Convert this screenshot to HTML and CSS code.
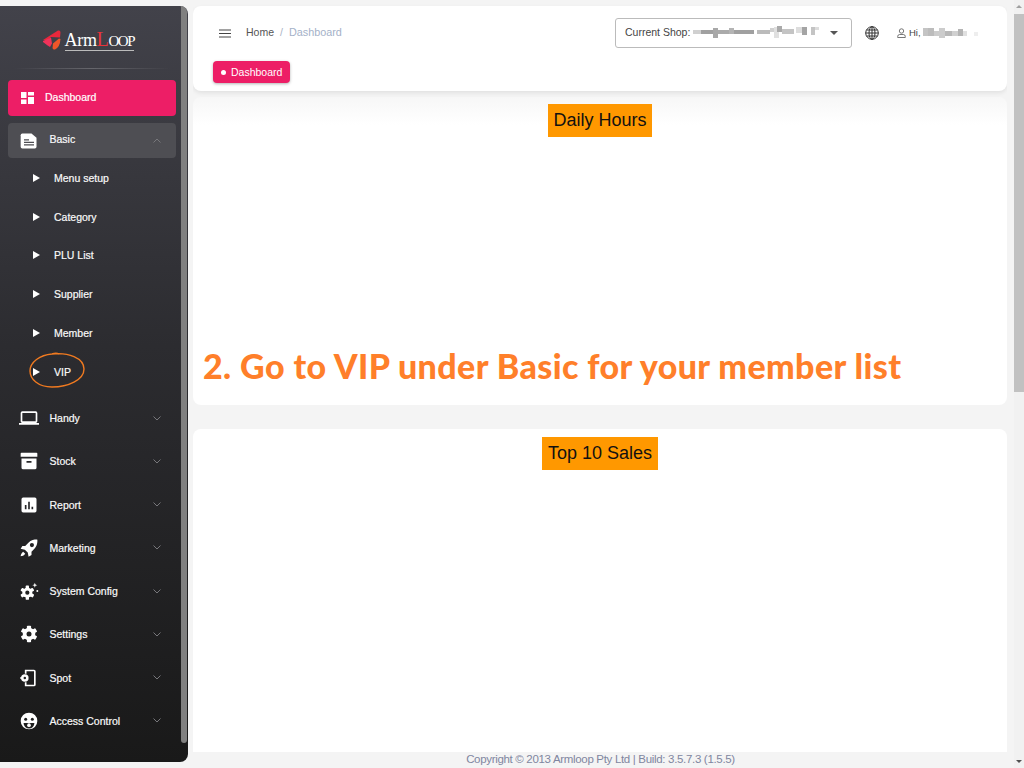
FILE: index.html
```html
<!DOCTYPE html>
<html lang="en">
<head>
  <meta charset="UTF-8">
  <meta name="viewport" content="width=device-width, initial-scale=1.0">
  <title>Armloop Dashboard</title>
  <link rel="stylesheet" href="styles.css">
</head>
<body>
  <div class="app">
    <aside class="sidebar">
      <div class="logo">
        <svg class="logo-mark" width="20" height="20" viewBox="0 0 20 20">
          <path d="M1 10 L16 .5 Q18.500 0 18.500 2.500 L18 7.500 L9 7 L5 10.500 Z" fill="#e8283c"/>
          <path d="M1 11 L9 7.500 L10 13.500 L8 17 Q6 16 1 12 Z" fill="#f0325a"/>
          <path d="M17 8.500 L18.500 9 Q18 17 13 19.500 Q11 20 10.500 18 L11 13.500 Z" fill="#f0562a"/>
        </svg>
        <span class="logo-text">Arm<span class="logo-l">L</span><span class="logo-oop">OOP</span></span>
      </div>
      <div class="divider"></div>

      <a class="nav-active">
        <svg class="active-icon" width="13" height="12" viewBox="0 0 13 12" fill="#fff">
          <rect x="0" y="0" width="5.500" height="6"/><rect x="7" y="0" width="6" height="3.500"/>
          <rect x="0" y="7.500" width="5.500" height="4.500"/><rect x="7" y="5" width="6" height="7"/>
        </svg>
        <span class="active-label">Dashboard</span>
      </a>

      <div class="nav-open">
        <svg class="nav-icon" width="20" height="20" viewBox="0 0 24 24"><path fill="#fff" d="M4 3h11l6 5v11a2 2 0 0 1-2 2H4a2 2 0 0 1-2-2V5a2 2 0 0 1 2-2z"/><path fill="#4e4e53" d="M6 10h6v1.500H6zM6 13h12v1.500H6zM6 16h12v1.500H6z"/></svg>
        <span class="nav-label">Basic</span>
        <svg class="chev" width="8" height="5" viewBox="0 0 8 5"><path d="M.5 4.500 4 1l3.500 3.500"/></svg>
      </div>

      <ul class="submenu">
        <li><i class="tri"></i>Menu setup</li>
        <li><i class="tri"></i>Category</li>
        <li><i class="tri"></i>PLU List</li>
        <li><i class="tri"></i>Supplier</li>
        <li><i class="tri"></i>Member</li>
        <li><i class="tri"></i>VIP</li>
      </ul>

      <ul class="menu">
        <li>
          <svg class="nav-icon" width="20" height="20" viewBox="0 0 24 24" fill="#fff"><path d="M20 18a2 2 0 0 0 2-2V6a2 2 0 0 0-2-2H4a2 2 0 0 0-2 2v10a2 2 0 0 0 2 2H0v2h24v-2zM4 6h16v10H4z"/></svg>
          <span class="nav-label">Handy</span>
          <svg class="chev" width="8" height="5" viewBox="0 0 8 5"><path d="M.5 .5 4 4l3.500-3.500"/></svg>
        </li>
        <li>
          <svg class="nav-icon" width="20" height="20" viewBox="0 0 24 24" fill="#fff"><path d="M3 2h18a1 1 0 0 1 1 1v4H2V3a1 1 0 0 1 1-1zM3 9h18v11a2 2 0 0 1-2 2H5a2 2 0 0 1-2-2zm6 3v2h6v-2z"/></svg>
          <span class="nav-label">Stock</span>
          <svg class="chev" width="8" height="5" viewBox="0 0 8 5"><path d="M.5 .5 4 4l3.500 -3.500"/></svg>
        </li>
        <li>
          <svg class="nav-icon" width="20" height="20" viewBox="0 0 24 24" fill="#fff"><path d="M19 3H5a2 2 0 0 0-2 2v14a2 2 0 0 0 2 2h14a2 2 0 0 0 2-2V5a2 2 0 0 0-2-2zM9 17H7v-5h2zm4 0h-2V8h2zm4 0h-2v-3h2z"/></svg>
          <span class="nav-label">Report</span>
          <svg class="chev" width="8" height="5" viewBox="0 0 8 5"><path d="M.5 .5 4 4l3.500-3.500"/></svg>
        </li>
        <li>
          <svg class="nav-icon" width="20" height="20" viewBox="0 0 24 24" fill="#fff"><path d="M22 2s-6-1-11 4L7.500 9.500H4l-2 3.500 5 1 3.500 3.500 1 5 3.500-2v-4l3.500-3.500C23 8 22 2 22 2zM15.500 11a2.500 2.500 0 1 1 0-5 2.500 2.500 0 0 1 0 5zM5 16.500c-2 1-3 4-3 5.500 1.500 0 4.500-1 5.500-3z"/></svg>
          <span class="nav-label">Marketing</span>
          <svg class="chev" width="8" height="5" viewBox="0 0 8 5"><path d="M.5 .5 4 4l3.500-3.500"/></svg>
        </li>
        <li>
          <svg class="nav-icon" width="20" height="20" viewBox="0 0 24 24" fill="#fff">
            <circle cx="10" cy="14" r="6"/>
            <rect x="8" y="5.500" width="4" height="17" rx="1"/>
            <rect x="8" y="5.500" width="4" height="17" rx="1" transform="rotate(60 10 14)"/>
            <rect x="8" y="5.500" width="4" height="17" rx="1" transform="rotate(120 10 14)"/>
            <circle cx="10" cy="14" r="2.500" fill="#222"/>
            <path d="M19 2l.8 2.200L22 5l-2.200.8L19 8l-.8-2.200L16 5l2.200-.8z"/>
            <circle cx="22" cy="12" r="1.200"/>
          </svg>
          <span class="nav-label">System Config</span>
          <svg class="chev" width="8" height="5" viewBox="0 0 8 5"><path d="M.5 .5 4 4l3.500-3.500"/></svg>
        </li>
        <li>
          <svg class="nav-icon" width="20" height="20" viewBox="0 0 24 24" fill="#fff">
            <circle cx="12" cy="12" r="7.500"/>
            <rect x="9.500" y="2" width="5" height="20" rx="1"/>
            <rect x="9.500" y="2" width="5" height="20" rx="1" transform="rotate(60 12 12)"/>
            <rect x="9.500" y="2" width="5" height="20" rx="1" transform="rotate(120 12 12)"/>
            <circle cx="12" cy="12" r="3" fill="#222"/>
          </svg>
          <span class="nav-label">Settings</span>
          <svg class="chev" width="8" height="5" viewBox="0 0 8 5"><path d="M.5 .5 4 4l3.500-3.500"/></svg>
        </li>
        <li>
          <svg class="nav-icon" width="20" height="20" viewBox="0 0 24 24" fill="#fff"><path d="M7 2h11a2 2 0 0 1 2 2v16a2 2 0 0 1-2 2H7v-5h2v3h9V4H9v3H7z"/><circle cx="7" cy="12" r="4.500"/><rect x="1.500" y="11" width="2" height="2"/><circle cx="7" cy="12" r="1.500" fill="#222"/></svg>
          <span class="nav-label">Spot</span>
          <svg class="chev" width="8" height="5" viewBox="0 0 8 5"><path d="M.5 .5 4 4l3.500-3.500"/></svg>
        </li>
        <li>
          <svg class="nav-icon" width="20" height="20" viewBox="0 0 24 24">
            <circle cx="12" cy="12" r="10" fill="#fff"/>
            <g fill="#1e1e1e">
              <circle cx="8" cy="10" r="1.800"/><circle cx="16" cy="10" r="1.800"/>
              <path d="M5.500 14.500h13a6.500 6.500 0 0 1-13 0z"/>
            </g>
            <circle cx="12" cy="17" r="2.200" fill="#fff"/>
          </svg>
          <span class="nav-label">Access Control</span>
          <svg class="chev" width="8" height="5" viewBox="0 0 8 5"><path d="M.5 .5 4 4l3.500-3.500"/></svg>
        </li>
      </ul>
      <div class="side-scroll"></div>
    </aside>

    <main class="content">
      <header class="topbar">
        <div class="topbar-row">
          <svg class="burger" width="12" height="9" viewBox="0 0 12 9"><path d="M0 1h12M0 4.500h12M0 8h12"/></svg>
          <span class="crumb">Home</span>
          <span class="crumb-sep">/</span>
          <span class="crumb-current">Dashboard</span>
          <div class="shop-select">
            <span class="shop-label">Current Shop:</span>
            <svg class="mosaic" width="130" height="14" viewBox="0 0 130 14">
              <rect x="0" y="4" width="8" height="4" fill="#d0d0d0"/><rect x="8" y="4" width="12" height="4" fill="#a0a0a0"/>
              <rect x="20" y="2" width="5" height="10" fill="#a8a8a8"/><rect x="25" y="4" width="11" height="4" fill="#aaa"/>
              <rect x="36" y="2" width="5" height="6" fill="#b4b4b4"/><rect x="41" y="4" width="20" height="4" fill="#a0a0a0"/>
              <rect x="64" y="4" width="13" height="4" fill="#bbb"/><rect x="77" y="2" width="4" height="4" fill="#d0d0d0"/>
              <rect x="81" y="1" width="5" height="11" fill="#e0e0e0"/><rect x="84" y="0" width="5" height="6" fill="#aaa"/>
              <rect x="89" y="3" width="12" height="5" fill="#c4c4c4"/><rect x="103" y="1" width="6" height="6" fill="#ddd"/>
              <rect x="109" y="1" width="5" height="8" fill="#a4a4a4"/><rect x="118" y="1" width="4" height="8" fill="#c4c4c4"/><rect x="122" y="1" width="4" height="3" fill="#ddd"/>
            </svg>
            <i class="caret"></i>
          </div>
          <svg class="globe" width="14" height="14" viewBox="0 0 14 14"><circle cx="7" cy="7" r="6.300"/><ellipse cx="7" cy="7" rx="3" ry="6.300"/><path d="M7 .7v12.600M.7 7h12.600M1.500 4h11M1.500 10h11"/></svg>
          <div class="user">
            <svg class="user-icon" width="9" height="10" viewBox="0 0 9 10"><circle cx="4.500" cy="3" r="2.200"/><path d="M.7 9.500v-1a2 2 0 0 1 2-2h3.600a2 2 0 0 1 2 2v1z"/></svg>
            <span class="user-hi">Hi,</span>
            <svg class="mosaic" width="56" height="12" viewBox="0 0 56 12">
              <rect x="0" y="1" width="5" height="8" fill="#c4c4c4"/><rect x="5" y="1" width="6" height="8" fill="#bcbcbc"/>
              <rect x="11" y="4" width="5" height="5" fill="#ccc"/><rect x="16" y="1" width="6" height="10" fill="#ccc"/>
              <rect x="22" y="4" width="7" height="5" fill="#b8b8b8"/><rect x="29" y="4" width="6" height="5" fill="#d0d0d0"/>
              <rect x="35" y="2" width="5" height="7" fill="#b4b4b4"/><rect x="40" y="4" width="4" height="5" fill="#e0e0e0"/>
              <rect x="51" y="5" width="4" height="4" fill="#eee"/>
            </svg>
          </div>
        </div>
        <span class="tag"><i class="tag-dot"></i>Dashboard</span>
      </header>

      <section class="card card-hours">
        <h2 class="chart-title">Daily Hours</h2>
        <p class="callout">2. Go to VIP under Basic for your member list</p>
      </section>

      <section class="card card-sales">
        <h2 class="chart-title">Top 10 Sales</h2>
      </section>

      <footer class="copyright">Copyright &copy; 2013 Armloop Pty Ltd | Build: 3.5.7.3 (1.5.5)</footer>
    </main>

    <div class="page-scroll">
      <i class="arrow-up"></i>
      <div class="thumb"></div>
      <i class="arrow-down"></i>
    </div>
  </div>

  <!-- hand drawn ring around the VIP row -->
  <svg class="vip-ring" width="58" height="38" viewBox="0 0 58 38">
    <path d="M24 2 C40 0 56 6 56 17 C56 28 40 35 24 35 C10 35 2 27 2 19 C2 10 12 3 24 2 C27 1 29 1 31 2"/>
  </svg>
</body>
</html>
```

FILE: styles.css
```css
* {
  box-sizing: border-box;
}
html, body {
  margin: 0;
  height: 100%;
  overflow: hidden;
}
body {
  font-family: "Liberation Sans", Arial, sans-serif;
  background: #f4f4f4;
  color: #333;
}
.app {
  display: flex;
  height: 768px;
}

/* sidebar */
.sidebar {
  position: relative;
  flex: 0 0 188px;
  margin: 6px 0;
  height: 756px;
  padding: 0 12px 0 7.500px;
  background: linear-gradient(180deg, #42424a 0%, #2c2c30 45%, #191919 100%);
  border-radius: 0 8px 8px 0;
  color: #fff;
}
.side-scroll {
  position: absolute;
  top: 0;
  right: 1px;
  width: 6px;
  height: 737px;
  background: #808080;
  border-radius: 0 6px 3px 3px;
}
.logo {
  display: flex;
  align-items: center;
  height: 34px;
  margin-top: 17px;
  padding-left: 34px;
}
.logo-mark {
  flex: none;
}
.logo-text {
  margin-left: 3px;
  font-family: "Liberation Serif", serif;
  font-size: 18px;
  line-height: 18px;
  border-bottom: 1px solid #bbb;
  white-space: nowrap;
  letter-spacing: -.3px;
}
.logo-l {
  color: #e8343c;
  font-size: 20px;
}
.logo-oop {
  font-size: 15px;
  letter-spacing: -1.500px;
}
.divider {
  height: 1px;
  margin: 11px 6px 11px;
  background: linear-gradient(90deg, transparent, #66666c 50%, transparent);
}
.nav-active {
  display: flex;
  align-items: center;
  height: 36px;
  padding-left: 13.500px;
  background: #ed1e66;
  border-radius: 4px;
  font-size: 10.500px;
  -webkit-text-stroke: .2px #fff;
}
.active-icon {
  margin-right: 11px;
}
.active-label {
  padding-bottom: 2px;
}
.nav-open {
  display: flex;
  align-items: center;
  height: 35px;
  margin-top: 7px;
  padding-left: 11.500px;
  padding-right: 15px;
  background: #4e4e53;
  border-radius: 4px;
}
.nav-open .nav-label {
  padding-bottom: 3px;
}
.nav-icon {
  flex: none;
  margin-right: 10.500px;
}
.nav-label {
  flex: 1;
  font-size: 10.500px;
  -webkit-text-stroke: .2px #eee;
}
.chev {
  flex: none;
  fill: none;
  stroke: #77777b;
  stroke-width: 1;
}
.submenu, .menu {
  list-style: none;
  margin: 0;
  padding: 0;
}
.submenu {
  padding-top: .4px;
}
.submenu li {
  display: flex;
  align-items: center;
  height: 38.800px;
  padding-left: 25px;
  font-size: 10.500px;
  -webkit-text-stroke: .2px #eee;
}
.tri {
  width: 0;
  height: 0;
  margin-right: 14.500px;
  border-left: 7px solid #fff;
  border-top: 4px solid transparent;
  border-bottom: 4px solid transparent;
}
.menu {
  padding-top: 5.400px;
}
.menu li {
  display: flex;
  align-items: center;
  height: 43.250px;
  padding-left: 11.500px;
  padding-right: 15px;
}

/* main column */
.content {
  display: flex;
  flex-direction: column;
  flex: 0 0 814px;
  margin-left: 5px;
  height: 768px;
  overflow: hidden;
}
.topbar {
  flex: none;
  height: 85px;
  margin-top: 6px;
  padding: 12px 21px 0 20px;
  background: #fff;
  border-radius: 8px;
  box-shadow: 0 2px 4px rgba(0, 0, 0, .08);
}
.topbar-row {
  display: flex;
  align-items: center;
  height: 30px;
  padding-left: 6px;
  font-size: 10.500px;
}
.burger {
  fill: none;
  stroke: #444;
  stroke-width: 1;
  margin-right: 15px;
}
.crumb, .crumb-sep, .crumb-current, .shop-label, .user-hi {
  padding-bottom: 2px;
}
.crumb {
  color: #555;
}
.crumb-sep {
  margin: 0 6px;
  color: #a8b2c4;
}
.crumb-current {
  color: #a4b1c8;
  font-size: 10.800px;
}
.shop-select {
  display: flex;
  align-items: center;
  width: 237px;
  height: 30px;
  margin-left: auto;
  padding: 0 13px 0 9px;
  border: 1px solid #bbb;
  border-radius: 3px;
  color: #444;
}
.mosaic {
  filter: blur(.7px);
}
.shop-select .mosaic {
  margin-left: 3px;
}
.caret {
  margin-left: auto;
  border-top: 4px solid #555;
  border-left: 4px solid transparent;
  border-right: 4px solid transparent;
}
.globe {
  margin-left: 13px;
  fill: none;
  stroke: #333;
  stroke-width: 1;
}
.user {
  display: flex;
  align-items: center;
  width: 89px;
  margin-left: 18px;
  font-size: 9.500px;
  color: #444;
}
.user-icon {
  margin-right: 3px;
  fill: none;
  stroke: #555;
  stroke-width: .8;
}
.user .mosaic {
  margin-left: 2px;
}
.tag {
  display: inline-flex;
  align-items: center;
  width: 77px;
  height: 22px;
  margin-top: 13px;
  padding-left: 8px;
  background: #ed1e66;
  border-radius: 4px;
  box-shadow: 0 1px 3px rgba(0, 0, 0, .3);
  color: #fff;
  font-size: 10.500px;
}
.tag-dot {
  width: 5px;
  height: 5px;
  margin-right: 5px;
  background: #fff;
  border-radius: 50%;
}
.card {
  flex: none;
  padding-top: 7px;
  background: #fff;
  border-radius: 8px;
  text-align: center;
}
.card-hours {
  display: flex;
  flex-direction: column;
  height: 308px;
  margin-top: 6px;
  background: linear-gradient(180deg, #f7f7f7 0, #fff 28px);
}
.card-sales {
  height: 340px;
  margin-top: 24px;
  padding-top: 8px;
}
.chart-title {
  display: inline-block;
  align-self: center;
  height: 32.500px;
  margin: 0;
  padding: 0 5.500px;
  background: #ff9800;
  color: #111;
  font-size: 18px;
  font-weight: 400;
  line-height: 32px;
}
.callout {
  margin: auto 0 19px;
  padding-left: 10px;
  color: #ff7f2a;
  font-family: Lato, sans-serif;
  font-size: 34px;
  font-weight: 900;
  line-height: 40px;
  letter-spacing: .4px;
  text-align: left;
  white-space: nowrap;
}
.copyright {
  position: absolute;
  left: 193px;
  right: 10px;
  bottom: 0;
  height: 16px;
  padding-right: 6px;
  background: #f4f4f4;
  color: #8086a0;
  font-size: 11.500px;
  letter-spacing: -.32px;
  line-height: 15px;
  text-align: center;
}

/* browser scrollbar */
.page-scroll {
  position: absolute;
  top: 0;
  right: 0;
  width: 10px;
  height: 768px;
  background: #f1f1f1;
}
.thumb {
  position: absolute;
  top: 14px;
  width: 10px;
  height: 378px;
  background: #c1c1c1;
}
.arrow-up, .arrow-down {
  position: absolute;
  left: 2px;
  border-left: 3px solid transparent;
  border-right: 3px solid transparent;
}
.arrow-up {
  top: 5px;
  border-bottom: 3px solid #a0a0a0;
}
.arrow-down {
  bottom: 5px;
  border-top: 3px solid #505050;
}
.vip-ring {
  position: absolute;
  left: 28px;
  top: 352px;
  fill: none;
  stroke: #f07a20;
  stroke-width: 1.400;
}
```
